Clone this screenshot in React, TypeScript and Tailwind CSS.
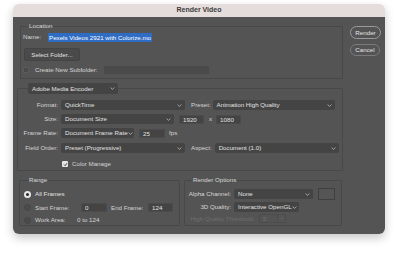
import React from "react";

function Chevron() {
  return (
    <svg width="5" height="3" viewBox="0 0 5 3" className="shrink-0">
      <path d="M0.6 0.5 L2.5 2.4 L4.4 0.5" stroke="#bcbcbc" strokeWidth="0.8" fill="none" />
    </svg>
  );
}

function Select({ text, className = "", disabled = false }: { text: string; className?: string; disabled?: boolean }) {
  return (
    <div
      className={`flex items-center justify-between h-[10px] rounded-[2px] pl-[4px] pr-[3px] ${
        disabled ? "bg-[#4d4d4d] text-[#6c6c6c]" : "bg-[#444444] text-[#e2e2e2]"
      } ${className}`}
    >
      <span className="leading-[10px] whitespace-nowrap">{text}</span>
      <Chevron />
    </div>
  );
}

function Field({ text, className = "" }: { text: string; className?: string }) {
  return (
    <div className={`h-[9px] bg-[#444444] border border-[#4b4b4b] pl-[3px] leading-[8px] text-[#e2e2e2] ${className}`}>
      {text}
    </div>
  );
}

function Radio({ on = false }: { on?: boolean }) {
  return on ? (
    <div className="w-[7px] h-[7px] rounded-full bg-[#e8e8e8] flex items-center justify-center shrink-0">
      <div className="w-[3px] h-[3px] rounded-full bg-[#2a2a2a]" />
    </div>
  ) : (
    <div className="w-[7px] h-[7px] rounded-full bg-[#4b4b4b] border border-[#464646] shrink-0" />
  );
}

export default function App() {
  return (
    <div
      className="w-[399px] h-[257px] bg-white text-[6.2px] text-[#d4d4d4]"
      style={{ fontFamily: '"Liberation Sans", Arial, sans-serif' }}
    >
      <div className="pl-[13px] pt-[4px]">
        <div className="w-[372px] h-[230px] rounded-[6px] overflow-hidden shadow-[0_4px_10px_rgba(0,0,0,0.22)] flex flex-col">
          <div className="h-[13px] bg-[#e5dcdc] flex items-center justify-center text-[7px] font-semibold text-[#3b3b3b]">
            Render Video
          </div>
          <div className="flex-1 bg-[#545454] flex">
            {/* left column */}
            <div className="w-[330px] flex flex-col">
              {/* Location */}
              <fieldset className="ml-[7px] mt-[5px] w-[323px] h-[57px] border border-[#484848] rounded-[1px] px-0">
                <legend className="ml-[7px] px-[1px] h-[8px] leading-[8px] text-[#d6d6d6]">Location</legend>
                <div className="flex items-center h-[10px] mt-[2px] ml-[2px]">
                  <span className="w-[25px]">Name:</span>
                  <span className="bg-[#2f6cc4] text-white h-[9px] leading-[9px] px-[1px]">
                    Pexels Videos 2921 with Colorize.mo
                  </span>
                </div>
                <div className="mt-[6px] ml-[3px] w-[56px] h-[13px] rounded-[2px] bg-[#4a4a4a] border border-[#444] flex items-center justify-center text-[#e2e2e2]">
                  Select Folder...
                </div>
                <div className="mt-[5px] ml-[2px] flex items-center h-[8px]">
                  <div className="w-[6px] h-[6px] rounded-[1px] bg-[#4a4a4a] border border-[#5c5c5c]" />
                  <span className="ml-[6px] w-[69px]">Create New Subfolder:</span>
                  <div className="w-[105px] h-[8px] bg-[#4a4a4a]" />
                </div>
              </fieldset>

              {/* Encoder */}
              <fieldset className="ml-[4px] mt-[4px] w-[326px] h-[88px] border border-[#484848] rounded-[1px] px-0">
                <legend className="ml-[10px] px-0">
                  <Select text="Adobe Media Encoder" className="w-[90px] h-[11px]" />
                </legend>
                <div className="flex items-center mt-[6px]">
                  <span className="w-[40px] text-right">Format:</span>
                  <Select text="QuickTime" className="ml-[3px] w-[124px]" />
                  <span className="ml-[6px]">Preset:</span>
                  <Select text="Animation High Quality" className="ml-[2px] w-[122px]" />
                </div>
                <div className="flex items-center mt-[4px]">
                  <span className="w-[40px] text-right">Size:</span>
                  <Select text="Document Size" className="ml-[3px] w-[113px]" />
                  <Field text="1920" className="ml-[5px] w-[25px]" />
                  <span className="ml-[5px]">x</span>
                  <Field text="1080" className="ml-[4px] w-[25px]" />
                </div>
                <div className="flex items-center mt-[4px]">
                  <span className="w-[40px] text-right">Frame Rate:</span>
                  <Select text="Document Frame Rate" className="ml-[3px] w-[73px]" />
                  <Field text="25" className="ml-[5px] w-[26px]" />
                  <span className="ml-[4px]">fps</span>
                </div>
                <div className="flex items-center mt-[5px]">
                  <span className="w-[40px] text-right">Field Order:</span>
                  <Select text="Preset (Progressive)" className="ml-[3px] w-[124px]" />
                  <span className="ml-[6px]">Aspect:</span>
                  <Select text="Document (1.0)" className="ml-[3px] w-[124px]" />
                </div>
                <div className="flex items-center mt-[7px] ml-[44px] h-[8px]">
                  <div className="w-[6px] h-[6px] rounded-[1px] bg-[#e6e6e6] flex items-center justify-center">
                    <svg width="5" height="5" viewBox="0 0 5 5">
                      <path d="M1 2.6 L2.1 3.7 L4 1.2" stroke="#333" strokeWidth="0.9" fill="none" />
                    </svg>
                  </div>
                  <span className="ml-[4px]">Color Manage</span>
                </div>
              </fieldset>

              {/* Bottom groups */}
              <div className="flex mt-[5px] ml-[6px] gap-[4px]">
                <fieldset className="w-[161px] h-[50px] border border-[#484848] rounded-[1px] px-0">
                  <legend className="ml-[8px] px-[1px] h-[8px] leading-[8px] text-[#d6d6d6]">Range</legend>
                  <div className="flex items-center mt-[6px] ml-[4px] h-[8px]">
                    <Radio on />
                    <span className="ml-[4px] text-[#e2e2e2]">All Frames</span>
                  </div>
                  <div className="flex items-center mt-[5px] ml-[4px] h-[9px]">
                    <Radio />
                    <span className="ml-[4px] w-[46px]">Start Frame:</span>
                    <Field text="0" className="w-[26px]" />
                    <span className="ml-[4px] w-[37px]">End Frame:</span>
                    <Field text="124" className="w-[25px]" />
                  </div>
                  <div className="flex items-center mt-[4px] ml-[4px] h-[8px]">
                    <Radio />
                    <span className="ml-[4px] w-[42px]">Work Area:</span>
                    <span>0 to 124</span>
                  </div>
                </fieldset>
                <fieldset className="w-[158px] h-[50px] border border-[#484848] rounded-[1px] px-0">
                  <legend className="ml-[7px] px-[1px] h-[8px] leading-[8px] text-[#d6d6d6]">Render Options</legend>
                  <div className="flex items-center mt-[4px]">
                    <span className="w-[46px] text-right">Alpha Channel:</span>
                    <Select text="None" className="ml-[3px] w-[79px]" />
                    <div className="ml-[5px] w-[17px] h-[12px] border border-[#3f3f3f] bg-[#555]" />
                  </div>
                  <div className="flex items-center mt-[2px]">
                    <span className="w-[46px] text-right">3D Quality:</span>
                    <Select text="Interactive OpenGL" className="ml-[3px] w-[65px]" />
                  </div>
                  <div className="flex items-center mt-[2px] text-[#6e6e6e]">
                    <span className="w-[70px] text-right whitespace-nowrap">High Quality Threshold:</span>
                    <div className="ml-[4px] w-[27px] h-[9px] border border-[#4c4c4c] flex items-center">
                      <span className="pl-[3px] w-[17px]">5</span>
                      <div className="h-full border-l border-[#4c4c4c] flex items-center pl-[2px]">
                        <svg width="4" height="3" viewBox="0 0 5 3">
                          <path d="M0.6 0.5 L2.5 2.4 L4.4 0.5" stroke="#6a6a6a" strokeWidth="0.8" fill="none" />
                        </svg>
                      </div>
                    </div>
                  </div>
                </fieldset>
              </div>
            </div>

            {/* right column */}
            <div className="ml-[7px] pt-[9px] flex flex-col gap-[5px] text-[#e4e4e4]">
              <div className="w-[31px] h-[13px] rounded-full border border-[#9a9a9a] flex items-center justify-center">
                Render
              </div>
              <div className="w-[30px] h-[12px] rounded-full border border-[#7a7a7a] flex items-center justify-center">
                Cancel
              </div>
            </div>
          </div>
        </div>
      </div>
    </div>
  );
}
